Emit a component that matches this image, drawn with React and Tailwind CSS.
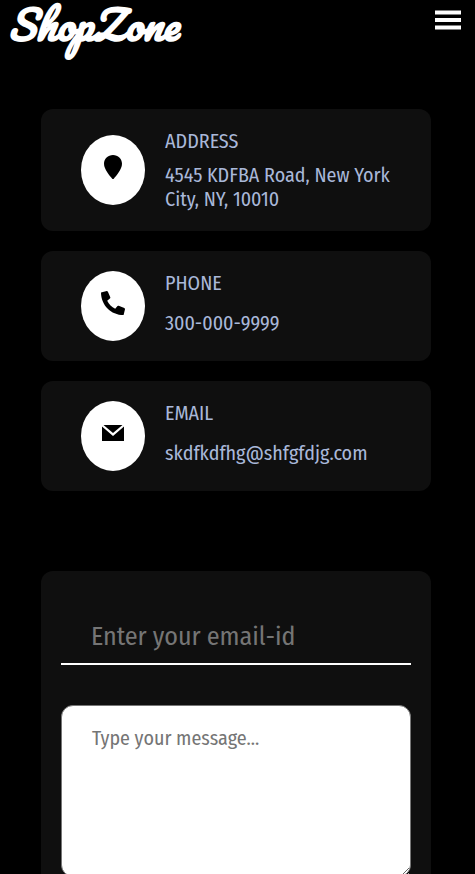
const cards = [
  { label: "ADDRESS", value: "4545 KDFBA Road, New York City, NY, 10010", icon: "pin", text: "gap-[10px]" },
  { label: "PHONE", value: "300-000-9999", icon: "phone", text: "gap-4 pb-[6px]" },
  { label: "EMAIL", value: "skdfkdfhg@shfgfdjg.com", icon: "mail", text: "gap-4 pb-[6px]" },
];

function Icon({ name }) {
  return (
    <svg viewBox="0 0 24 24" className="mb-[6px] size-6" fill="currentColor" aria-hidden="true">
      {name === "pin" && <path d="M12 0C7 0 3 3.9 3 8.8C3 14.5 9 21 11 23.5Q12 24.5 13 23.5C15 21 21 14.5 21 8.8C21 3.9 17 0 12 0Z" />}
      {name === "phone" && <path d="M0 1.4L5.8 0Q6.5 0 6.9.7L9.3 6.3Q9.5 7 8.9 7.5L6.2 9.8C8 13.4 10.6 16 14.2 17.8L16.5 15.1Q17 14.5 17.7 14.7L23.3 17.1Q24 17.5 24 18.2L22.6 24C10 24 0 14 0 1.4Z" />}
      {name === "mail" && <path d="M2.5 4H21.5L12 12ZM1 5.4L12 15L23 5.4V20H1Z" />}
    </svg>
  );
}

export default function App() {
  return (
    <div className="min-h-screen bg-black font-['Fira_Sans_Condensed','Open_Sans',sans-serif] text-[#a9b8d9]">
      <header className="flex items-start justify-between pl-2 pr-[14px] text-white">
        <a href="#" className="block h-[61px] font-[Pacifico,'Liberation_Serif',cursive] text-[40px] font-bold italic leading-[48px]">ShopZone</a>
        <button aria-label="Open menu" className="mt-[10px]">
          <svg viewBox="0 0 26 20" className="h-5 w-[26px]" fill="currentColor"><path d="M0 0.5h26v4H0zM0 8h26v4H0zM0 15.5h26v4H0z" /></svg>
        </button>
      </header>
      <main className="mt-12 pl-[41px] pr-11">
        <section className="flex flex-col gap-5">
          {cards.map((c) => (
            <article key={c.label} className="flex items-center gap-5 rounded-xl bg-[#0f0f0f] px-10 py-5">
              <div className="flex h-[70px] w-16 shrink-0 items-center justify-center rounded-[50%] bg-white text-black">
                <Icon name={c.icon} />
              </div>
              <div className={`flex flex-col text-xl leading-6 ${c.text}`}>
                <h2>{c.label}</h2>
                <p>{c.value}</p>
              </div>
            </article>
          ))}
        </section>
        <form className="mt-20 rounded-xl bg-[#0f0f0f] px-5 pb-8 pt-[38px]">
          <input type="email" aria-label="Email" placeholder="Enter your email-id" className="block h-14 w-full border-b-2 border-white bg-transparent px-[30px] text-[26px] outline-none placeholder:text-[#757575]" />
          <textarea aria-label="Message" placeholder="Type your message..." className="mt-10 block h-[172px] w-full resize rounded-xl border border-[#767676] bg-white px-[30px] py-5 text-xl leading-6 text-black placeholder:text-[#757575]" />
        </form>
      </main>
    </div>
  );
}
